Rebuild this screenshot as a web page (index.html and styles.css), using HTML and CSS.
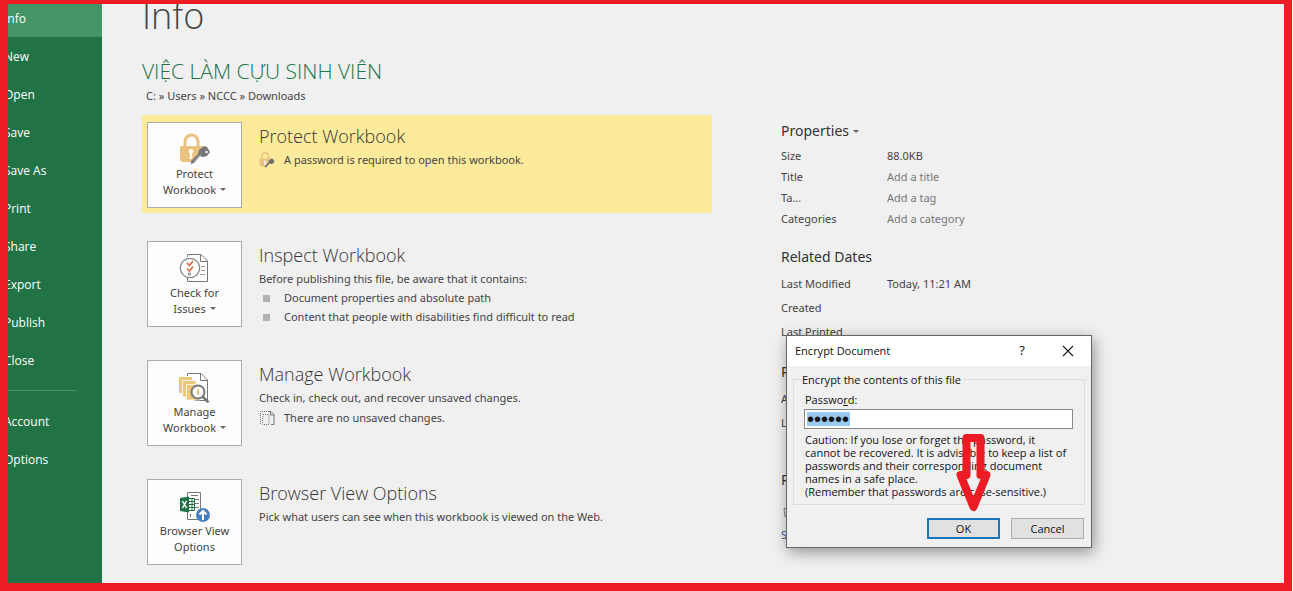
FILE: index.html
```html
<!DOCTYPE html>
<html lang="en">
<head>
<meta charset="utf-8">
<title>Info</title>
<link rel="stylesheet" href="styles.css">
</head>
<body>
<div class="frame">
  <nav class="sidebar">
    <a class="nav-item active" href="#">Info</a>
    <a class="nav-item" href="#">New</a>
    <a class="nav-item" href="#">Open</a>
    <a class="nav-item" href="#">Save</a>
    <a class="nav-item" href="#">Save As</a>
    <a class="nav-item" href="#">Print</a>
    <a class="nav-item" href="#">Share</a>
    <a class="nav-item" href="#">Export</a>
    <a class="nav-item" href="#">Publish</a>
    <a class="nav-item" href="#">Close</a>
    <hr class="nav-line">
    <a class="nav-item" href="#">Account</a>
    <a class="nav-item" href="#">Options</a>
  </nav>
  <main class="main">
    <h1 class="title">Info</h1>
    <h2 class="doc-name">VIỆC LÀM CỰU SINH VIÊN</h2>
    <p class="path">C: » Users » NCCC » Downloads</p>
    <div class="columns">
      <div class="actions">
        <section class="action highlighted">
          <button class="tile" type="button">
            <svg class="tile-icon" viewBox="0 0 32 32">
              <path d="M6 14V8.500a6.500 6.500 0 0 1 13 0V14" fill="none" stroke="#eac282" stroke-width="3"/>
              <path d="M1 13h23v4l-9 9v3H3l-2-2z" fill="#eac282"/>
              <path d="M12 16a2.300 2.300 0 0 1 1.200 4.300V26h-2.400v-5.700A2.300 2.300 0 0 1 12 16z" fill="#fff"/>
              <path d="M20 17l5-4 3 1 3 5-3 4-4 1-3-1-6 7-3 1v-3l7-7z" fill="#777"/>
              <circle cx="27.500" cy="19" r="1.200" fill="#fff"/>
              <path d="M14 29l8-8" stroke="#aaa" stroke-width="1"/>
            </svg>
            <span>Protect<br>Workbook<i class="caret"></i></span>
          </button>
          <div class="text">
            <h3>Protect Workbook</h3>
            <p class="note"><svg class="note-icon" viewBox="0 0 32 32">
              <path d="M6 14V8.500a6.500 6.500 0 0 1 13 0V14" fill="none" stroke="#eac282" stroke-width="3"/>
              <path d="M1 13h23v4l-9 9v3H3l-2-2z" fill="#eac282"/>
              <path d="M12 17v8" stroke="#fff" stroke-width="3"/>
              <path d="M20 17l5-4 3 1 3 5-3 4-4 1-3-1-6 7-3 1v-3l7-7z" fill="#6d6d6d"/>
            </svg>A password is required to open this workbook.</p>
          </div>
        </section>
        <section class="action">
          <button class="tile" type="button">
            <svg class="tile-icon" viewBox="0 0 32 32">
              <path d="M8.500 5V2.500H22l6.500 6.500v20.500h-20V26" fill="#fff" stroke="#777"/>
              <path d="M21.500 2.500v7h7" fill="none" stroke="#777"/>
              <path d="M22 14.500h4M22 18.500h4M21 22.500h5" stroke="#999"/>
              <circle cx="11" cy="16" r="9.700" fill="#fff" stroke="#888" stroke-width="1.300"/>
              <path d="M8 11l2.500 2.500L14 9M8 16.500l2.500 2.500 3.500-4.500" fill="none" stroke="#dd6a45" stroke-width="1.600"/>
              <path d="M9.500 21h2v2h-2z" fill="none" stroke="#888"/>
            </svg>
            <span>Check for<br>Issues<i class="caret"></i></span>
          </button>
          <div class="text">
            <h3>Inspect Workbook</h3>
            <p>Before publishing this file, be aware that it contains:</p>
            <ul class="issues">
              <li>Document properties and absolute path</li>
              <li>Content that people with disabilities find difficult to read</li>
            </ul>
          </div>
        </section>
        <section class="action">
          <button class="tile" type="button">
            <svg class="tile-icon" viewBox="0 0 32 32">
              <path d="M8.500 5V2.500H22l6.500 6.500v20.500h-13" fill="#fff" stroke="#777"/>
              <path d="M21.500 2.500v7h7" fill="none" stroke="#777"/>
              <path d="M0 6h13v16H0z" fill="#eac87c"/>
              <path d="M3.500 9.500h13.500V26h-13.500z" fill="#eac87c" stroke="#fff" stroke-width=".8"/>
              <path d="M7.500 13.500h13V29h-13z" fill="#eac87c" stroke="#fff" stroke-width=".8"/>
              <circle cx="19" cy="21" r="6.500" fill="#fff" stroke="#777" stroke-width="2"/>
              <path d="M20 17a4.500 4.500 0 0 0 0 8z" fill="#eac87c"/>
              <path d="M23.500 25.500l6 6" stroke="#777" stroke-width="2.500"/>
            </svg>
            <span>Manage<br>Workbook<i class="caret"></i></span>
          </button>
          <div class="text">
            <h3>Manage Workbook</h3>
            <p>Check in, check out, and recover unsaved changes.</p>
            <p class="note"><svg class="note-icon" viewBox="0 0 16 16">
              <path d="M1.500 14V1.500H11" fill="none" stroke="#777" stroke-dasharray="1 1"/>
              <path d="M4 4.500h6v10H3.500z" fill="none" stroke="#777" stroke-dasharray="1 1"/>
              <path d="M10 1.500h2l3 3v10h-3M11.500 2v3H15" fill="none" stroke="#777"/>
            </svg>There are no unsaved changes.</p>
          </div>
        </section>
        <section class="action">
          <button class="tile" type="button">
            <svg class="tile-icon" viewBox="0 0 32 32">
              <path d="M8.500 2.500h13v27h-13z" fill="#fff" stroke="#777"/>
              <path d="M12 5.500h7M16 9.500h4M16 13.500h4M16 17.500h4" stroke="#777"/>
              <path d="M11.500 24v3" stroke="#777"/>
              <path d="M9.500 8.500h6v12h-6z" fill="#fff" stroke="#217346"/>
              <path d="M10 11.500h6M10 14.500h6M10 17.500h6M13 9v11" stroke="#217346"/>
              <path d="M1 8l9-1.500v16L1 21z" fill="#217346"/>
              <path d="M3.500 11l4 7M7.500 11l-4 7" stroke="#fff" stroke-width="1.500"/>
              <circle cx="24" cy="25" r="7" fill="#4a7ebb"/>
              <path d="M24 30v-8M20.500 24.500L24 21l3.500 3.500" fill="none" stroke="#fff" stroke-width="2"/>
            </svg>
            <span>Browser View<br>Options</span>
          </button>
          <div class="text">
            <h3>Browser View Options</h3>
            <p>Pick what users can see when this workbook is viewed on the Web.</p>
          </div>
        </section>
      </div>
      <aside class="details">
        <h4>Properties<i class="caret"></i></h4>
        <dl class="props">
          <dt>Size</dt><dd>88.0KB</dd>
          <dt>Title</dt><dd class="muted">Add a title</dd>
          <dt>Ta...</dt><dd class="muted">Add a tag</dd>
          <dt>Categories</dt><dd class="muted">Add a category</dd>
        </dl>
        <h4>Related Dates</h4>
        <dl class="props loose">
          <dt>Last Modified</dt><dd>Today, 11:21 AM</dd>
          <dt>Created</dt><dd></dd>
          <dt>Last Printed</dt><dd></dd>
        </dl>
        <h4>Related People</h4>
        <dl class="props loose people">
          <dt>Author</dt><dd></dd>
          <dt>Last Mod...</dt><dd></dd>
        </dl>
        <h4>Related Docs</h4>
        <svg class="folder" viewBox="0 0 16 16"><path d="M3 5.500h4l1 2h6v6H4z" fill="none" stroke="#777"/></svg>
        <a class="more" href="#">Show All</a>
      </aside>
    </div>
  </main>
  <form class="dialog" role="dialog" aria-labelledby="dialog-title">
    <header class="dialog-bar">
      <span id="dialog-title">Encrypt Document</span>
      <button class="bar-button" type="button" aria-label="Help">?</button>
      <button class="bar-button" type="button" aria-label="Close"><svg class="close-icon" viewBox="0 0 12 12"><path d="M1 1l10 10M11 1L1 11" stroke="#222" stroke-width="1.200"/></svg></button>
    </header>
    <fieldset class="group">
      <legend>Encrypt the contents of this file</legend>
      <label for="password">Passwo<u>r</u>d:</label>
      <input id="password" class="password" type="password" value="123456">
      <p>Caution: If you lose or forget the password, it<br>cannot be recovered. It is advisable to keep a list of<br>passwords and their corresponding document<br>names in a safe place.<br>(Remember that passwords are case-sensitive.)</p>
    </fieldset>
    <div class="dialog-actions">
      <button class="push primary" type="button">OK</button>
      <button class="push" type="button">Cancel</button>
    </div>
    <svg class="arrow" viewBox="0 0 38 80"><path d="M12.500 5h14v37h6L19.500 74 6.500 42h6z" fill="none" stroke="#ed1c24" stroke-width="8" stroke-linejoin="round"/></svg>
  </form>
</div>
</body>
</html>
```
FILE: styles.css
```css
* { box-sizing: border-box; }
body {
  margin: 0;
  background: #f0f0f0;
  color: #444;
  font: 11px/16px "Noto Sans", "Open Sans", sans-serif;
}
h1, h2, h3, h4, p, ul, dl, dd { margin: 0; padding: 0; font-weight: 400; }
button, input { font: inherit; color: inherit; }
.frame {
  position: relative;
  display: flex;
  height: 100vh;
  margin-right: 1px;
  overflow: hidden;
  border: 8px solid #ed1c24;
  border-top-width: 4px;
}
.sidebar {
  flex: none;
  width: 94px;
  margin-top: -5px;
  overflow: hidden;
  background: #217346;
}
.nav-item {
  display: block;
  height: 38px;
  padding-top: 1px;
  font: 12px/38px "Open Sans", "Noto Sans", sans-serif;
  text-indent: -4px;
  color: #fff;
  text-decoration: none;
}
.active { background: #439467; }
.nav-line {
  width: 68px;
  height: 1px;
  margin: 11px 0;
  border: 0;
  background: #439467;
}
.main { flex: 1; padding-left: 40px; }
.title, .doc-name, .text h3 { font-family: "Open Sans", "Noto Sans", sans-serif; font-weight: 300; }
.title {
  margin-top: -12px;
  font-size: 36px;
  line-height: 48px;
}
.doc-name {
  margin-top: 17px;
  color: #217346;
  font-size: 21px;
  line-height: 28px;
}
.path { margin: 3px 0 11px 4px; }
.columns { display: flex; gap: 69px; }
.actions { display: grid; gap: 21px; flex: 0 1 570px; align-content: start; }
.action { display: flex; gap: 17px; height: 98px; padding: 7px 5px 5px; }
.highlighted { background: #fdeb9b; }
.tile {
  display: flex;
  flex: none;
  flex-direction: column;
  align-items: center;
  width: 95px;
  height: 86px;
  padding: 10px 0 0;
  border: 1px solid #ababab;
  background: #fdfdfd;
}
.tile-icon { width: 32px; height: 32px; margin-bottom: 1px; }
.caret {
  display: inline-block;
  margin-left: 4px;
  border: 3px solid transparent;
  border-top-color: #666;
  border-bottom: 0;
  vertical-align: 3px;
}
.text h3 { font-size: 18px; line-height: 24px; margin: 2px 0 4px; color: #333; }
.text p { white-space: nowrap; }
.note { display: flex; gap: 9px; align-items: center; }
.text p + .note { margin-top: 4px; }
.note-icon { width: 16px; height: 16px; }
.issues { list-style: none; }
.issues li { display: flex; align-items: center; gap: 14px; margin-top: 3px; white-space: nowrap; }
.issues li::before { content: ""; width: 7px; height: 7px; margin-left: 4px; background: #b1b1b1; }
.details { flex: 1; padding-top: 5px; }
.details h4 { font-size: 14px; line-height: 22px; color: #333; }
.props { display: grid; grid-template-columns: 106px 1fr; row-gap: 5px; margin: 6px 0 19px; }
.loose { row-gap: 8px; margin: 8px 0 21px; }
.people { margin-bottom: 38px; }
.muted { color: #777; }
.folder { display: block; width: 16px; height: 16px; margin: 12px 0 8px; }
.more { display: block; color: #2a6099; text-decoration: none; }
.dialog {
  position: absolute;
  left: 778px;
  top: 331px;
  width: 306px;
  border: 1px solid #666;
  background: #f0f0f0;
  box-shadow: 2px 4px 14px rgba(0, 0, 0, .4);
  color: #111;
  font: 11px/13px "Open Sans", "Noto Sans", sans-serif;
}
.dialog-bar { display: flex; align-items: center; height: 30px; padding: 0 0 2px 8px; background: #fff; }
.dialog-bar span { flex: 1; }
.bar-button { width: 46px; height: 28px; padding: 0; border: 0; background: none; font-size: 13px; }
.close-icon { width: 12px; height: 12px; vertical-align: -2px; }
.group {
  margin: 7px 6px 0;
  padding: 7px 10px 6px 11px;
  border: 1px solid #dcdcdc;
}
.group legend { margin-left: -5px; padding: 0 2px; }
.group label { display: block; }
.password {
  display: block;
  width: 100%;
  height: 20px;
  margin: 3px 0 4px -1px;
  padding: 0 2px;
  border: 1px solid #8a8a8a;
  background: linear-gradient(#99c9ef, #99c9ef) 2px 2px / 43px 14px no-repeat #fff;
  font: 20px/18px "Liberation Sans", Arial, sans-serif;
}
.group p { white-space: nowrap; }
.dialog-actions { display: flex; justify-content: flex-end; gap: 11px; padding: 13px 7px 8px; }
.push { width: 73px; height: 21px; padding: 0; border: 1px solid #adadad; background: #e1e1e1; }
.primary { border: 2px solid #1a75bb; }
.arrow { position: absolute; left: 167px; top: 97px; width: 38px; height: 80px; }
```
